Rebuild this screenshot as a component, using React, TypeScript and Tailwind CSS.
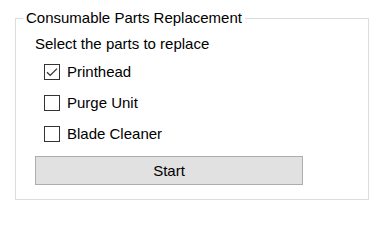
import React from "react";

function Box({ checked }: { checked?: boolean }) {
  return (
    <div className="w-[16px] h-[16px] border border-[#333333] bg-white flex items-center justify-center shrink-0">
      {checked && (
        <svg width="14" height="14" viewBox="0 0 14 14">
          <path d="M2 7.2 L5.2 10.4 L12 3.6" fill="none" stroke="#333333" strokeWidth="1.3" />
        </svg>
      )}
    </div>
  );
}

function Row({ label, checked }: { label: string; checked?: boolean }) {
  return (
    <div className="h-[31px] flex items-center pl-[9px] gap-[7px]">
      <Box checked={checked} />
      <span>{label}</span>
    </div>
  );
}

export default function App() {
  return (
    <div
      className="w-[378px] h-[217px] bg-white text-[15px] leading-[18px] text-[#000000] pt-[18px] pl-[15px]"
      style={{ fontFamily: '"Liberation Sans", Arial, sans-serif' }}
    >
      <div className="relative w-[354px] h-[182px] border border-[#dcdcdc] pt-[16px] pl-[19px]">
        <div className="absolute left-[7px] top-[-10px] bg-white px-[3px] leading-[18px]">
          Consumable Parts Replacement
        </div>
        <div>Select the parts to replace</div>
        <div className="mt-[3px] flex flex-col">
          <Row label="Printhead" checked />
          <Row label="Purge Unit" />
          <Row label="Blade Cleaner" />
        </div>
        <div className="mt-[7px] w-[268px] h-[29px] bg-[#e1e1e1] border border-[#adadad] flex items-center justify-center">
          Start
        </div>
      </div>
    </div>
  );
}
